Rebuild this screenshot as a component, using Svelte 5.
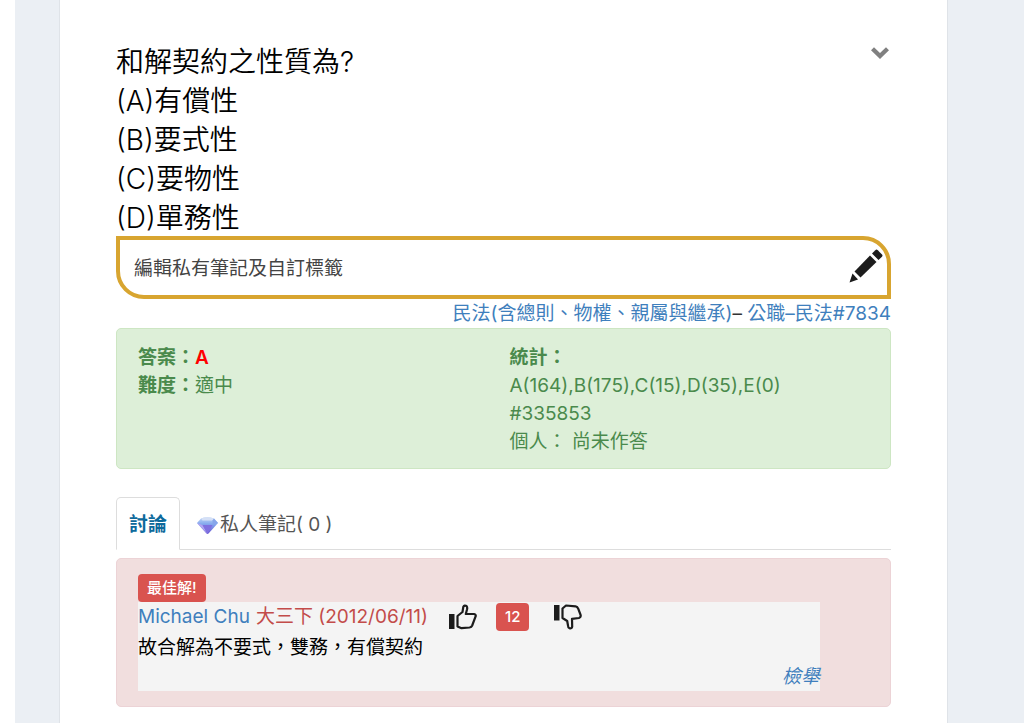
<script lang="ts">
	type Comment = {
		id: number;
		author: string;
		level: string;
		date: string;
		text: string;
		likes: number;
	};

	const question = {
		title: '和解契約之性質為?',
		options: ['(A)有償性', '(B)要式性', '(C)要物性', '(D)單務性']
	};

	const comments: Comment[] = [
		{
			id: 1,
			author: 'Michael Chu',
			level: '大三下',
			date: '2012/06/11',
			text: '故合解為不要式，雙務，有償契約',
			likes: 12
		}
	];

	let activeTab = $state('discuss');
</script>

<div class="page">
	<main class="card">
		<header class="question">
			<div>
				<p>{question.title}</p>
				{#each question.options as option (option)}
					<p>{option}</p>
				{/each}
			</div>
			<button class="toggle" aria-label="選單">
				<svg width="18" height="12" viewBox="0 0 18 12">
					<path d="M0 3.2 3 0.3 9 6 15 0.3 18 3.2 9 12z" fill="#808080" />
				</svg>
			</button>
		</header>

		<section class="note">
			<span>編輯私有筆記及自訂標籤</span>
			<button class="edit" aria-label="編輯">
				<svg width="34" height="34" viewBox="0 0 34 34" fill="#1c1c1c">
					<path d="M0.5 33.5 3.5 24.5 9 30.5z" />
					<path d="M5.5 22.5 21 6.5 27.5 13 11.5 28.5z" />
					<path d="M23 4.5 26.3 1.2Q27.5 0 28.8 1.2L33 5.4Q34 6.6 33 7.8L29.5 11z" />
				</svg>
			</button>
		</section>

		<nav class="source">
			<a href="#subject">民法(含總則、物權、親屬與繼承)</a>–
			<a href="#exam">公職–民法#7834</a>
		</nav>

		<section class="answer">
			<div>
				<p><b>答案：<span class="correct">A</span></b></p>
				<p><b>難度：</b>適中</p>
			</div>
			<div>
				<p><b>統計：</b></p>
				<p>A(164),B(175),C(15),D(35),E(0)</p>
				<p>#335853</p>
				<p>個人： 尚未作答</p>
			</div>
		</section>

		<div class="tabs">
			<button
				class="tab"
				class:active={activeTab === 'discuss'}
				onclick={() => (activeTab = 'discuss')}
			>
				討論
			</button>
			<button
				class="tab"
				class:active={activeTab === 'notes'}
				onclick={() => (activeTab = 'notes')}
			>
				<svg width="21" height="17" viewBox="0 0 21 17">
					<defs>
						<linearGradient id="gem" x1="0" y1="0" x2="0" y2="1">
							<stop offset="0" stop-color="#c3d7f5" />
							<stop offset="0.4" stop-color="#84a9ee" />
							<stop offset="1" stop-color="#6753d2" />
						</linearGradient>
					</defs>
					<path d="M4 1.5Q10 -0.8 17 1.5L21 6 11.5 16.5Q10.5 17.3 9.5 16.5L0 6z" fill="url(#gem)" />
					<path d="M0 6 5.5 8 10.5 16.8z" fill="#b3a4f2" />
					<path d="M5.5 8H15.5L10.5 16.8z" fill="#7f70e0" />
					<path d="M4 1.5 5.5 3.5H15.5L17 1.5Q10 -0.8 4 1.5z" fill="#d5e0f6" />
					<path d="M15.5 8 21 6 17 1.5 15.5 3.5z" fill="#86a5ea" />
				</svg>私人筆記( 0 )
			</button>
		</div>

		{#each comments as comment (comment.id)}
			<article class="best">
				<span class="label">最佳解!</span>
				<div class="comment">
					<div class="byline">
						<a href="#user">{comment.author}</a>
						<span class="meta">{comment.level} ({comment.date})</span>
						<button class="vote" aria-label="讚">
							<svg width="28" height="26" viewBox="0 0 28 26">
								<path d="M0 10H5.5V25H0z" fill="#1c1c1c" />
								<path
									d="M8.5 12 13.5 8 14.3 2.8Q15.5 0.8 17.5 2Q18.6 3 18 5.5L16.8 10H25Q27.4 10.6 26.5 12.7L23.2 21.5Q22.5 23.2 20.5 23.5L12.5 24.2 8.5 22.4z"
									fill="none"
									stroke="#1c1c1c"
									stroke-width="2.2"
									stroke-linejoin="round"
								/>
							</svg>
						</button>
						<span class="count">{comment.likes}</span>
						<button class="vote" aria-label="倒讚">
							<svg width="28" height="26" viewBox="0 0 28 26">
								<path d="M0 1H5.5V16.5H0z" fill="#1c1c1c" />
								<path
									d="M8.5 4.5 12 1.5 21.5 2.3Q23.5 2.8 24.3 4.8L26.6 11Q27.2 13.3 25 14L18 14.8 18.2 22.5Q17.8 25 15.5 24.3Q14 23.7 14 21.5L13.2 17 8.5 14z"
									fill="none"
									stroke="#1c1c1c"
									stroke-width="2.2"
									stroke-linejoin="round"
								/>
							</svg>
						</button>
					</div>
					<p class="text">{comment.text}</p>
					<a class="report" href="#report">檢舉</a>
				</div>
			</article>
		{/each}
	</main>
</div>

<style>
	:global(body) {
		margin: 0;
		background: #ebeff4;
	}

	.page {
		display: flex;
		min-height: 100vh;
		box-sizing: border-box;
		padding: 0 76px 0 44px;
		border-left: 15px solid #fff;
		font-family: Inter, 'Noto Sans CJK TC', sans-serif;
		font-size: 19px;
		line-height: 28px;
		color: #333;
	}

	.card {
		flex: 1;
		min-width: 0;
		padding: 43px 56px 16px;
		background: #fff;
		border: solid #dfe3e8;
		border-width: 0 1px;
	}

	p {
		margin: 0;
	}

	a {
		color: #3f7fbd;
		text-decoration: none;
	}

	button {
		padding: 0;
		border: none;
		background: none;
		font: inherit;
		color: inherit;
		cursor: pointer;
	}

	svg {
		display: block;
	}

	.question {
		display: flex;
		justify-content: space-between;
		align-items: flex-start;
		margin-bottom: -2px;
		font-size: 28px;
		line-height: 39px;
		font-weight: 350;
		color: #000;
	}

	.toggle {
		padding: 4px 2px;
	}

	.note {
		display: flex;
		justify-content: space-between;
		align-items: center;
		height: 53px;
		padding: 2px 4px 0 14px;
		border: 4px solid #d8a530;
		border-radius: 0 28px;
		color: #444;
	}

	.edit {
		padding-bottom: 6px;
	}

	.source {
		padding-top: 1px;
		text-align: right;
	}

	.answer {
		display: grid;
		grid-template-columns: 1fr 1fr;
		gap: 12px;
		padding: 15px 21px 12px;
		background: #ddefd8;
		border: 1px solid #cde6c3;
		border-radius: 5px;
		color: #4a8a4c;
	}

	b {
		font-weight: 600;
	}

	.correct {
		color: #f00;
	}

	.tabs {
		display: flex;
		margin: 28px 0 8px;
		border-bottom: 1px solid #ddd;
	}

	.tab {
		display: flex;
		align-items: center;
		gap: 2px;
		margin-bottom: -1px;
		padding: 13px 12px 10px;
		border: 1px solid transparent;
		border-radius: 5px 5px 0 0;
		color: #555;
	}

	.tab + .tab {
		padding-left: 16px;
	}

	.tab.active {
		background: #fff;
		border-color: #ddd;
		border-bottom-color: #fff;
		font-weight: 700;
		color: #0d6a9c;
	}

	.best {
		padding: 15px 70px 15px 21px;
		background: #f1dede;
		border: 1px solid #ecd3d6;
		border-radius: 5px;
	}

	.label,
	.count {
		display: block;
		width: fit-content;
		padding: 0 9px;
		background: #d9534f;
		border-radius: 4px;
		color: #fff;
		font-size: 15px;
		font-weight: 500;
	}

	.comment {
		background: #f4f4f4;
	}

	.byline {
		display: flex;
		align-items: center;
		gap: 6px;
		height: 30px;
	}

	.meta {
		margin-right: 8px;
		color: #c34c4a;
	}

	.vote {
		margin: 0 7px;
	}

	.count {
		margin: 0 12px 0 6px;
	}

	.text {
		padding-top: 2px;
		color: #000;
	}

	.report {
		display: block;
		padding-top: 1px;
		text-align: right;
		font-style: italic;
	}
</style>
